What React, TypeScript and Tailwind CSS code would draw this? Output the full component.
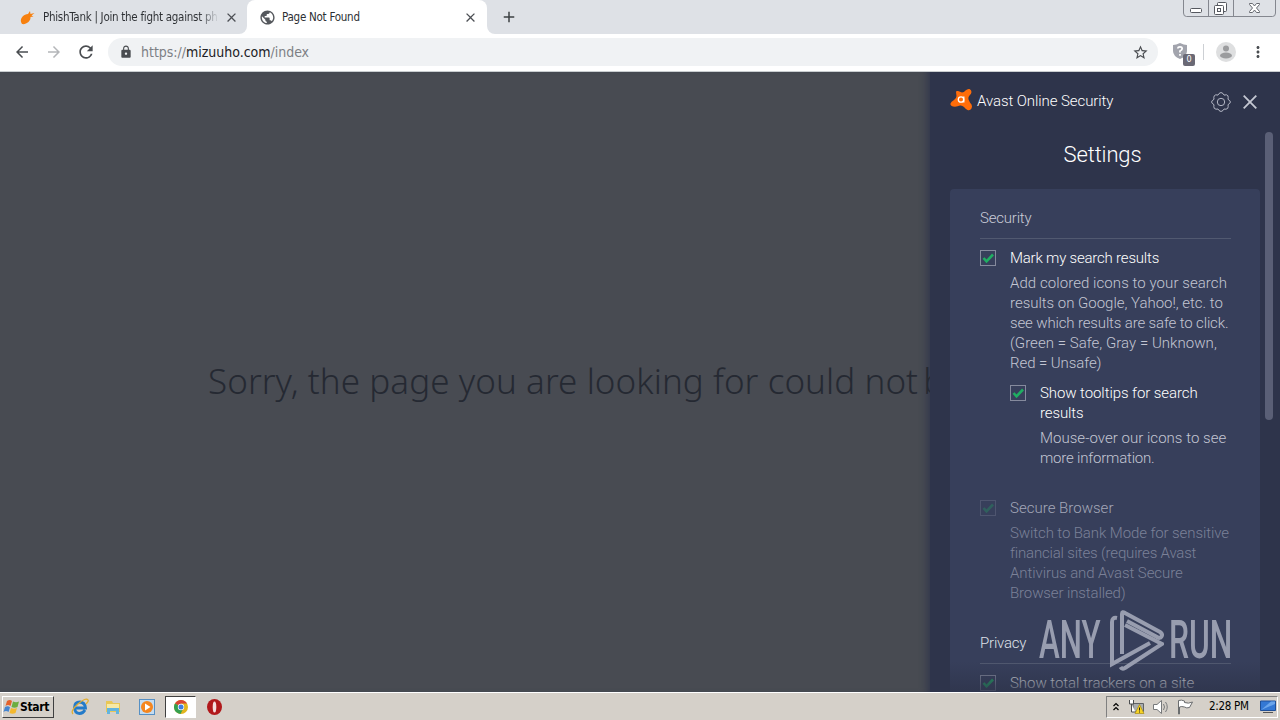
import type { ReactNode } from 'react';
import { MdLock, MdRefresh, MdArrowBack, MdArrowForward, MdStarBorder, MdMoreVert, MdPublic, MdClose, MdAdd } from 'react-icons/md';

function TabFoot({ side }: { side: 'left' | 'right' }) {
  return (
    <div className="h-2 w-2 bg-white">
      <div className={side === 'left' ? 'h-2 w-2 rounded-br-lg bg-[#dee1e6]' : 'h-2 w-2 rounded-bl-lg bg-[#dee1e6]'} />
    </div>
  );
}

function WindowButtons() {
  return (
    <svg width="94" height="17" viewBox="0 0 94 17" fill="none" stroke="#84878f">
      <path d="M.5 0v13q0 3.500 3 3.500h86q3 0 3-3.500V0M25.500 0v16M50.500 0v16" />
      <rect x="7.500" y="8.500" width="11" height="4" rx="1" fill="#fff" stroke="#55585f" />
      <rect x="34.500" y="2.500" width="9" height="9" rx="1" fill="#fff" stroke="#55585f" />
      <rect x="31.500" y="5.500" width="9" height="9" rx="1" fill="#fff" stroke="#55585f" />
      <rect x="34.500" y="8.500" width="3" height="3" stroke="#55585f" />
      <path d="M66.500 3.500h3l2 2.500 2-2.500h3v1l-3 3.500 3 3.500v1h-3l-2-2.500-2 2.500h-3v-1l3-3.500-3-3.500z" fill="#fff" stroke="#666970" />
    </svg>
  );
}

function TabStrip() {
  return (
    <div className="flex h-[34px] bg-[#dee1e6] text-[11.500px] text-[#3c4043]">
      <div className="flex w-[239px] items-center pl-5">
        <svg width="15" height="15" viewBox="0 0 15 15" fill="#f7800f">
          <path d="M1 12C0 8 4 4 8 4l2-3 .500 3 4-1-3 2.500 2 1-3 .500C11 11 6 15 2 14z" />
        </svg>
        <div className="ml-2 w-[176px] overflow-hidden whitespace-nowrap bg-gradient-to-r from-[#2c2f33] from-88% to-[#dee1e6] bg-clip-text pt-[2px] text-transparent">
          <span className="tracking-[-0.280px]">PhishTank | Join the fight against ph</span>
        </div>
        <MdClose className="ml-[5px] size-[15px] shrink-0 text-[#4c4f54]" />
      </div>
      <div className="flex items-end">
        <TabFoot side="left" />
        <div className="flex h-[34px] w-[240px] items-center rounded-t-lg bg-white pl-[12px] pr-[9px]">
          <MdPublic className="size-[17px] text-[#55585d]" />
          <span className="ml-1.5 flex-1 whitespace-nowrap pt-[2px] tracking-[-0.250px] text-[#2c2f33]">Page Not Found</span>
          <MdClose className="size-[15px] text-[#4c4f54]" />
        </div>
        <TabFoot side="right" />
      </div>
      <MdAdd className="ml-[5px] mt-[8px] size-[18px] text-[#3c4043]" />
      <div className="ml-auto mr-[3px]">
        <WindowButtons />
      </div>
    </div>
  );
}

function Toolbar() {
  return (
    <div className="flex h-[38px] items-center border-b border-[#c9cdd0] bg-white pb-px pl-[13px] text-[#4a4d51]">
      <MdArrowBack className="size-[18px]" />
      <MdArrowForward className="ml-[14px] size-[18px] text-[#b4b6b9]" />
      <MdRefresh className="ml-[13px] size-[20px]" />
      <div className="ml-[12px] flex h-[28px] w-[1050px] items-center rounded-full bg-[#f0f2f4] pl-[11px] pr-[9px]">
        <MdLock className="size-[14px]" />
        <div className="ml-[8px] flex-1 whitespace-nowrap text-[14px] tracking-[-0.020px] text-[#7d8084]">
          https://<span className="text-[#202124]">mizuuho.com</span>/index
        </div>
        <MdStarBorder className="size-[17px]" />
      </div>
      <div className="relative ml-[14px] h-[20px] w-[24px]">
        <svg width="16" height="18" viewBox="0 0 16 18">
          <path d="M8 1Q4 3 1 3v6q0 5 7 8 7-3 7-8V3Q12 3 8 1z" fill="#a2a4ad" />
          <path d="M5.800 6.500Q6 4.800 8 4.800t2.200 1.700Q10.200 8 8 9v1.500M8 12v1.800" stroke="#fff" strokeWidth="1.800" fill="none" />
        </svg>
        <div className="absolute left-[11px] top-[12px] flex h-[12px] w-[12px] items-center justify-center rounded-[2px] bg-[#6a6975] text-[9px] text-white">0</div>
      </div>
      <div className="ml-[7px] h-4 w-px bg-[#cdd0d4]" />
      <svg className="ml-[12px]" width="20" height="20" viewBox="0 0 20 20" fill="#9b9c9e">
        <circle cx="10" cy="10" r="10" fill="#dedfe0" />
        <circle cx="10" cy="6.500" r="3" />
        <ellipse cx="10" cy="13.500" rx="6" ry="3" />
      </svg>
      <MdMoreVert className="ml-[13px] size-[18px]" />
    </div>
  );
}

function Checkbox({ dim }: { dim?: boolean }) {
  return (
    <svg className={dim ? 'mt-[2px] shrink-0 opacity-30' : 'mt-[2px] shrink-0'} width="16" height="16" viewBox="0 0 16 16" fill="none">
      <rect x=".5" y=".5" width="15" height="15" stroke="#858a9d" />
      <path d="M3.500 8l3 3.300L13 4.500" stroke="#1fae62" strokeWidth="2.600" />
    </svg>
  );
}

type SettingProps = { title: ReactNode; children?: ReactNode; className?: string; dim?: boolean };

function Setting({ title, children, className = '', dim }: SettingProps) {
  return (
    <div className={`flex gap-[14px] ${className}`}>
      <Checkbox dim={dim} />
      <div className="whitespace-nowrap">
        <div className={dim ? 'tracking-[0.020px] text-[#a3a7b8]' : 'tracking-[-0.130px] text-white'}>{title}</div>
        {children && (
          <div className={dim ? 'mt-[5px] tracking-[-0.080px] text-[#7b8198]' : 'mt-[5px] tracking-[-0.030px] text-[#c3c6d3]'}>
            {children}
          </div>
        )}
      </div>
    </div>
  );
}

function AvastPanel() {
  return (
    <div className="relative h-full w-[350px] overflow-hidden bg-[#2e344b] font-['Roboto','Liberation_Sans',sans-serif] font-light">
      <div className="flex h-[60px] items-center pb-[2px] pl-[19px] pr-[23px]">
        <svg className="mb-[2px]" width="24" height="24" viewBox="0 0 24 24">
          <path d="M7 4Q7 2.500 9 3l4 1.500q2 0 3.500-2 2-2 4-1.500 2 .8 2 3 0 1.500-2 3.500-2 2.200-.5 5 1 2.500 2.500 4 1 1.800 0 4-1.500 2.500-4 1.500-2-1-3.500-3-2-2-4-1.500-3 1.500-7 1-3-1-2.500-3Q2 13.500 5 12q2.500-1.500 2.500-4z" fill="#ff6d0a" />
          <circle cx="12" cy="11.500" r="2.700" fill="none" stroke="#fff" strokeWidth="1.300" />
          <path d="M14.800 8.500v6" stroke="#fff" strokeWidth="1.300" />
        </svg>
        <span className="ml-[4px] flex-1 whitespace-nowrap text-[15px] tracking-[-0.080px] text-white">Avast Online Security</span>
        <svg className="mt-[2px]" width="20" height="20" viewBox="0 0 20 20" fill="none" stroke="#b4b7c5">
          <path d="M8 1.500Q10-.5 12 1.500l1 1.600 2.500-.3q2 .5 1.700 2.800l-.2 1.700 1.800 1.400q1.200 1.300 0 2.600L17 12.700l.2 2q0 2.300-2.200 2.500l-2-.2-1 1.500q-2 2-4 0L7 17l-2 .2q-2.200-.2-2.200-2.500l.2-2-1.800-1.400q-1.200-1.300 0-2.600L3 7.300l-.2-2Q3 3.200 4.800 2.800L7 3.100z" />
          <circle cx="10" cy="10" r="3.700" />
        </svg>
        <svg className="ml-[12px] mt-[2px]" width="14" height="14" viewBox="0 0 14 14" stroke="#c5c8d3" strokeWidth="1.800">
          <path d="M.7.7l12.600 12.600M13.300.7L.7 13.300" />
        </svg>
      </div>
      <div className="flex">
        <div className="ml-5 w-[310px]">
          <h1 className="h-[57px] pr-[5px] pt-[8px] text-center text-[22px] leading-[30px] tracking-[-0.150px] text-white">Settings</h1>
          <div className="h-[520px] rounded-t-[4px] bg-[#373f5b] pl-[30px] pr-[29px] pt-[19px] text-[15px] leading-[20px]">
            <div className="mb-[9px] h-[31px] border-b border-[#515970] tracking-[-0.200px] text-[#c9ccd8]">Security</div>
            <Setting title={<span className="tracking-[-0.200px]">Mark my search results</span>}>
              <span className="tracking-[0.070px]">Add colored icons to your search</span><br />
              <span className="tracking-[-0.020px]">results on Google, Yahoo!, etc. to</span><br />
              <span className="tracking-[-0.140px]">see which results are safe to click.</span><br />
              <span className="tracking-[0.040px]">(Green = Safe, Gray = Unknown,</span><br />
              <span className="tracking-[-0.080px]">Red = Unsafe)</span>
            </Setting>
            <Setting
              className="mt-[10px] pl-[30px]"
              title={<><span className="tracking-[-0.080px]">Show tooltips for search</span><br />results</>}
            >
              <span className="tracking-[0.030px]">Mouse-over our icons to see</span><br />
              <span className="tracking-[-0.200px]">more information.</span>
            </Setting>
            <Setting dim className="mt-[30px]" title="Secure Browser">
              <span className="tracking-[-0.100px]">Switch to Bank Mode for sensitive</span><br />
              <span className="tracking-[-0.180px]">financial sites (requires Avast</span><br />
              Antivirus and Avast Secure<br />
              <span className="tracking-[-0.120px]">Browser installed)</span>
            </Setting>
            <div className="mb-[9px] mt-[30px] h-[31px] border-b border-[#515970] tracking-[-0.200px] text-[#dfe1e8]">Privacy</div>
            <Setting title={<span className="tracking-[-0.050px]">Show total trackers on a site</span>} />
          </div>
        </div>
        <div className="ml-[5px] h-[288px] w-2 rounded-full bg-[#5a5f76]" />
      </div>
      {/* fade over the cut-off last row */}
      <div className="absolute inset-x-0 bottom-0 h-[30px] bg-gradient-to-t from-[#2e344b]/80 to-transparent" />
      <Watermark />
    </div>
  );
}

function Watermark() {
  return (
    <div className="absolute left-[109px] top-[537px] flex h-[62px] w-[195px] items-center font-medium text-[#989daf]">
      <div className="w-[71px] text-[53px] leading-[60px]">
        <span className="inline-block origin-left scale-x-[0.590]">ANY</span>
      </div>
      <svg className="shrink-0" width="54" height="62" viewBox="0 0 54 62" fill="none" stroke="#989daf" strokeWidth="4">
        <path d="M7 9Q2 8 2 13v42l38-21" />
        <path d="M12 45V5q0-3 3-1l35 19q3 2 1.500 4.500T47 28L17 12" />
        <path d="M15 16l37 19-37 24q-3 1.500-4.500-1" />
      </svg>
      <div className="ml-[5px] w-[64px] text-[53px] leading-[60px]">
        <span className="inline-block origin-left scale-x-[0.600]">RUN</span>
      </div>
    </div>
  );
}

function Taskbar() {
  return (
    <div className="flex h-[28px] items-center border-t border-white bg-[#d5d0c9] text-black">
      <div className="ml-[2px] flex h-[22px] w-[52px] items-center border border-b-[#404040] border-l-white border-r-[#404040] border-t-white">
        <svg width="17" height="16" viewBox="0 0 17 16">
          <path d="M4 2q3-2 5 0L7.500 7Q5 5 2.500 7z" fill="#e4622c" />
          <path d="M10 2.500q3 1.500 6 0L14.500 8q-3 1.500-6 0z" fill="#6cad3f" />
          <path d="M2 8q3-1.500 5 .3L5.500 13Q3 11 .5 13z" fill="#4585d0" />
          <path d="M8 9q3 1.500 6 0l-1.500 5q-3 1.500-6 0z" fill="#f4b82d" />
        </svg>
        <span className="whitespace-nowrap text-[12px] font-bold tracking-[-0.300px]">Start</span>
      </div>
      <svg className="ml-[17px]" width="18" height="18" viewBox="0 0 18 18" fill="none">
        <path d="M14 12q-2 3.500-5.500 3.500Q3.500 15 3.500 9.500T9 4q5 .5 5.500 6H5" stroke="#247bc9" strokeWidth="2.800" />
        <path d="M2 16Q-1 13 7 6t10-4q1 1-2 4" stroke="#e3ae2f" strokeWidth="1.300" />
      </svg>
      <svg className="ml-[16px]" width="16" height="16" viewBox="0 0 16 16">
        <path d="M1 2h6l1 2h7v9H1z" fill="#e9c756" />
        <path d="M2 5h12v5H2z" fill="#f7e9a5" />
        <path d="M2 9h12v6h-3v-3H5v3H2z" fill="#63b4de" />
      </svg>
      <svg className="ml-[18px]" width="16" height="16" viewBox="0 0 16 16">
        <rect x=".5" y=".5" width="15" height="15" fill="#c4dcf0" stroke="#5690c4" />
        <circle cx="8" cy="8" r="6" fill="#f5861e" />
        <path d="M6 4.500v7l5.500-3.500z" fill="#fff" />
      </svg>
      <div className="ml-[10px] flex h-[22px] w-[31px] items-center justify-center border border-b-white border-l-[#404040] border-r-white border-t-[#404040] bg-white">
        <svg width="14" height="14" viewBox="0 0 14 14">
          <circle cx="7" cy="7" r="7" fill="#e2b51e" />
          <path d="M7 7L1 3.400A7 7 0 0 1 13 3.500H7z" fill="#da4434" />
          <path d="M7 7L1 3.400A7 7 0 0 0 6.500 14L9 9z" fill="#35a04f" />
          <circle cx="7" cy="7" r="3.200" fill="#fff" />
          <circle cx="7" cy="7" r="2.500" fill="#3f7de0" />
        </svg>
      </div>
      <svg className="ml-[11px]" width="15" height="16" viewBox="0 0 15 16">
        <ellipse cx="7.500" cy="8" rx="7.500" ry="8" fill="#b1181b" />
        <ellipse cx="7.500" cy="8" rx="1.800" ry="5.500" fill="#f5dede" />
      </svg>
      <div className="ml-auto mr-[2px] flex h-[22px] w-[172px] items-center border border-b-white border-l-[#808080] border-r-white border-t-[#808080] pl-[6px]">
        <svg width="6" height="9" viewBox="0 0 6 9" fill="none" stroke="#000" strokeWidth="1.200">
          <path d="M.5 4L3 1.500 5.500 4M.5 8L3 5.500 5.500 8" />
        </svg>
        <svg className="ml-[9px]" width="17" height="16" viewBox="0 0 17 16">
          <path d="M5 4.500h10.500v8H5z" fill="#a9acaf" stroke="#606266" />
          <path d="M1.500 1v4h4V1M3.500 5v8h4" stroke="#4c4e50" fill="#fff" />
          <path d="M11.500 5.500l4.500 9H7z" fill="#f6d226" stroke="#a98d11" strokeWidth=".7" />
          <path d="M11.500 8.500v3M11.500 12.500v1" stroke="#222" />
        </svg>
        <svg className="ml-[8px]" width="17" height="16" viewBox="0 0 17 16" fill="none" stroke="#77797b">
          <path d="M.5 5.500H4L8.500 1.500v13L4 10.500H.5z" fill="#fff" />
          <path d="M10.500 5q2 3 0 6M12.500 3q3.500 5 0 10" />
        </svg>
        <svg className="ml-[7px]" width="17" height="16" viewBox="0 0 17 16" fill="#fff" stroke="#6b6d6f">
          <path d="M1.500 15V1.500q3-1 6 .5v1.500q4 1.500 8-.5l-3 5.500q-3 1-5-.5-3-1-5 0V15z" />
        </svg>
        <span className="ml-[15px] whitespace-nowrap pt-px text-[11.500px] tracking-[-0.300px]">2:28 PM</span>
        <svg className="ml-[11px]" width="16" height="14" viewBox="0 0 16 14">
          <path d="M.5 1h15v9.500H.5z" fill="#3478d4" stroke="#1e4f98" />
          <path d="M1 10L11 1.500h4V4z" fill="#6ba5eb" />
          <path d="M3 12.500h10" stroke="#555" />
        </svg>
      </div>
    </div>
  );
}

export default function App() {
  return (
    <div className="flex h-[720px] w-[1280px] flex-col overflow-hidden font-['DejaVu_Sans_Condensed','DejaVu_Sans',sans-serif]">
      <TabStrip />
      <Toolbar />
      <div className="flex h-[620px] overflow-hidden bg-[#484b52]">
        <div className="w-[930px] overflow-hidden pl-[208px] pt-[282px] shadow-[inset_-8px_0_8px_-6px_#2e344b]">
          <p className="whitespace-nowrap font-['Noto_Sans','Open_Sans',sans-serif] text-[35px] font-light leading-[54px] tracking-[0.070px] text-[#252932]">
            Sorry, the page you are looking for could not<span className="-ml-[4px]"> be found.</span>
          </p>
        </div>
        <AvastPanel />
      </div>
      <Taskbar />
    </div>
  );
}
